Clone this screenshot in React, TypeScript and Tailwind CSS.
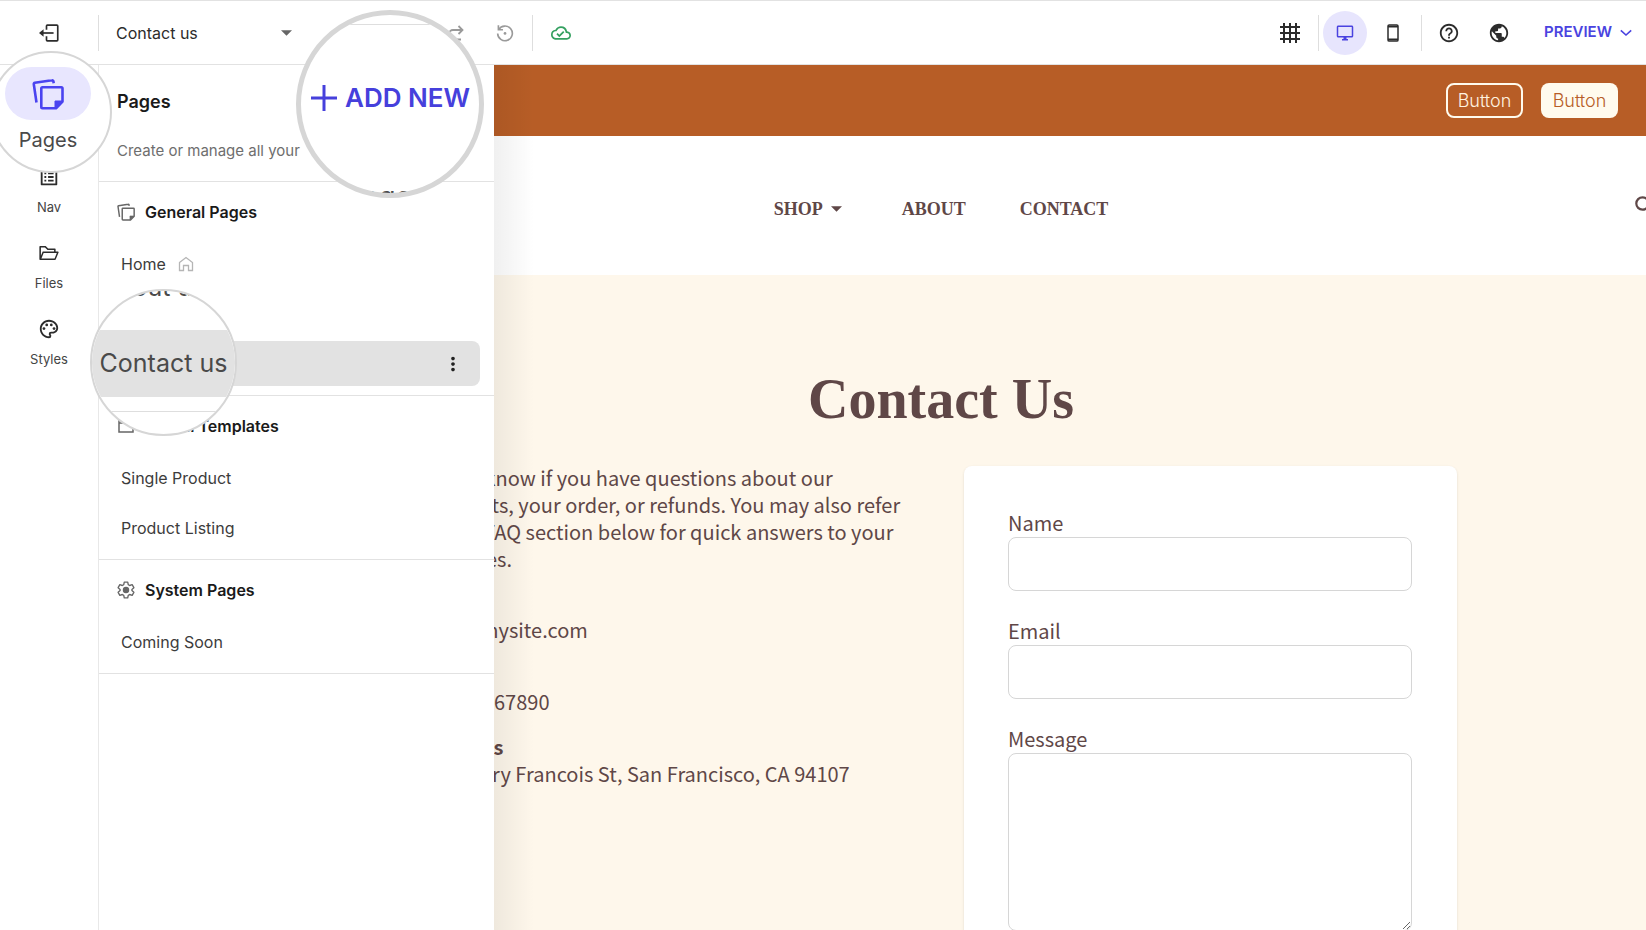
import React from "react";
import {
  MdGrid4X4,
  MdHelpOutline,
  MdPublic,
  MdListAlt,
  MdOutlinePalette,
  MdOutlineDesktopWindows,
  MdMoreVert,
  MdOutlineCloudDone,
} from "react-icons/md";
import { AiOutlineFolderOpen } from "react-icons/ai";

type IconProps = { className?: string };

function ExitIcon({ className }: IconProps) {
  return (
    <svg viewBox="0 0 24 24" className={className} fill="none" stroke="currentColor" strokeWidth="2" aria-hidden="true">
      <path d="M9 8V3.500a1 1 0 0 1 1-1h11.500a1 1 0 0 1 1 1v17a1 1 0 0 1-1 1H10a1 1 0 0 1-1-1V16" />
      <path d="M17.500 12H2" />
      <path d="M5.500 7.500 0 12l5.500 4.500z" fill="currentColor" stroke="none" />
    </svg>
  );
}

function PagesIcon({ className }: IconProps) {
  return (
    <svg viewBox="0 0 32 32" className={className} fill="none" stroke="currentColor" strokeWidth="2.600" strokeLinejoin="round" aria-hidden="true">
      <path d="M4.500 24.500 1.800 6.200a1.200 1.200 0 0 1 1-1.400L20 2.300a1.200 1.200 0 0 1 1.400 1l.3 2" />
      <path d="M10.500 9.200h18.800a1.200 1.200 0 0 1 1.200 1.200v13.100l-6.500 6.800H10.500a1.200 1.200 0 0 1-1.200-1.200V10.400a1.200 1.200 0 0 1 1.200-1.200z" />
      <path d="M23 30.300V23h7.500z" fill="currentColor" strokeWidth="1" />
    </svg>
  );
}

function HomeIcon({ className }: IconProps) {
  return (
    <svg viewBox="0 0 16 16" className={className} fill="none" stroke="currentColor" strokeWidth="1.300" aria-hidden="true">
      <path d="M1.500 6.500 8 1.500l6.500 5v8h-4V9.500h-5v5h-4z" />
    </svg>
  );
}

function GearIcon({ className }: IconProps) {
  return (
    <svg viewBox="0 0 24 24" className={className} fill="none" stroke="currentColor" strokeWidth="1.800" strokeLinejoin="round" aria-hidden="true">
      <path d="M9.700 1.500h4.600l.7 3.400 1.900 1.100 3.300-1.100 2.300 4-2.600 2.300v1.600l2.600 2.300-2.300 4-3.300-1.100-1.900 1.100-.7 3.400H9.700L9 19.100 7.100 18l-3.300 1.100-2.300-4 2.600-2.300v-1.600L1.500 8.900l2.300-4L7.100 6 9 4.900z" />
      <circle cx="12" cy="12" r="3.400" fill="currentColor" />
    </svg>
  );
}

function TemplateIcon({ className }: IconProps) {
  return (
    <svg viewBox="0 0 18 18" className={className} fill="none" stroke="currentColor" strokeWidth="1.500" aria-hidden="true">
      <path d="M2 1.500h13a1 1 0 0 1 1 1V15H2zM2 6h14" />
    </svg>
  );
}

function RedoIcon({ className }: IconProps) {
  return (
    <svg viewBox="0 0 24 24" className={className} fill="none" stroke="currentColor" strokeWidth="1.800" aria-hidden="true">
      <path d="M5 17V13a4 4 0 0 1 4-4h9M14.500 5l4 4-4 4M11 18.500h6" />
    </svg>
  );
}

function HistoryIcon({ className }: IconProps) {
  return (
    <svg viewBox="0 0 24 24" className={className} fill="none" stroke="currentColor" strokeWidth="1.800" aria-hidden="true">
      <path d="M5.200 8.200a8 8 0 1 1-1.200 4.300" />
      <path d="M4.800 3.500v5h5" />
      <circle cx="12" cy="12.500" r="1.500" fill="currentColor" stroke="none" />
    </svg>
  );
}

function PhoneIcon({ className }: IconProps) {
  return (
    <svg viewBox="0 0 20 20" className={className} fill="none" stroke="currentColor" aria-hidden="true">
      <rect x="5" y="1.900" width="10" height="16.200" rx="1.200" strokeWidth="1.500" />
      <path d="M5 3.600h10M5 16.400h10" strokeWidth="1.800" />
    </svg>
  );
}

function CaretIcon({ className }: IconProps) {
  return (
    <svg viewBox="0 0 12 6" className={className} fill="currentColor" aria-hidden="true">
      <path d="M0 0h12L6 6z" />
    </svg>
  );
}

function ChevronIcon({ className }: IconProps) {
  return (
    <svg viewBox="0 0 12 8" className={className} fill="none" stroke="currentColor" strokeWidth="1.600" aria-hidden="true">
      <path d="M.8 1.300 6 6l5.200-4.700" />
    </svg>
  );
}

function SearchIcon({ className }: IconProps) {
  return (
    <svg viewBox="0 0 20 20" className={className} fill="none" stroke="currentColor" strokeWidth="2.200" aria-hidden="true">
      <circle cx="7.500" cy="7.500" r="6.200" />
      <path d="m12 12 6.500 6.500" />
    </svg>
  );
}

function Divider() {
  return <span className="h-9 w-px shrink-0 bg-[#dedede]" />;
}

function TopBar() {
  return (
    <header className="flex h-[65px] shrink-0 items-center border-y border-[#e2e2e2] bg-white text-[#2c2c2c]">
      <div className="flex w-[98px] shrink-0 justify-center">
        <button aria-label="Exit editor">
          <ExitIcon className="size-5" />
        </button>
      </div>
      <Divider />
      <div className="relative ml-[17px] flex w-[178px] shrink-0 items-center">
        <select aria-label="Current page" className="w-full appearance-none bg-transparent text-base" defaultValue="Contact us">
          <option>Contact us</option>
          <option>Home</option>
          <option>About us</option>
        </select>
        <CaretIcon className="pointer-events-none absolute right-0.5 h-1.5 w-[11px] text-[#666]" />
      </div>
      <div className="ml-[100px] flex shrink-0 items-center gap-[26px] text-[#9a9a9a]">
        <button aria-label="Undo">
          <RedoIcon className="size-6 -scale-x-100" />
        </button>
        <button aria-label="Redo">
          <RedoIcon className="size-6" />
        </button>
        <button aria-label="History">
          <HistoryIcon className="size-[22px]" />
        </button>
      </div>
      <div className="ml-4 flex shrink-0 items-center gap-[18px]">
        <Divider />
        <MdOutlineCloudDone className="size-5 text-[#34a060]" />
      </div>

      <div className="ml-auto flex shrink-0 items-center pr-3.5">
        <button aria-label="Grid" className="mr-4">
          <MdGrid4X4 className="size-6" />
        </button>
        <Divider />
        <button aria-label="Desktop view" className="ml-1 flex size-11 items-center justify-center rounded-full bg-[#e7e5fd] text-[#4a43e0]">
          <MdOutlineDesktopWindows className="size-[18px]" />
        </button>
        <button aria-label="Phone view" className="mr-[18px] ml-4">
          <PhoneIcon className="size-5" />
        </button>
        <Divider />
        <button aria-label="Help" className="ml-4">
          <MdHelpOutline className="size-[22px]" />
        </button>
        <button aria-label="Language" className="ml-7">
          <MdPublic className="size-[22px]" />
        </button>
        <button className="ml-[34px] flex items-center gap-2 text-[15px] font-semibold text-[#4a43e0]">
          PREVIEW
          <ChevronIcon className="h-2 w-3" />
        </button>
      </div>
    </header>
  );
}

function RailItem({ label, children }: { label: string; children: React.ReactNode }) {
  return (
    <button className="flex flex-col items-center gap-2 text-[#2c2c2c]">
      <span className="flex size-6 items-center justify-center">{children}</span>
      <span className="text-[13px] leading-5 text-[#444]">{label}</span>
    </button>
  );
}

function Rail() {
  return (
    <nav aria-label="Editor" className="flex w-[98px] shrink-0 flex-col items-center gap-6 bg-white pt-[100px]">
      <RailItem label="Nav">
        <MdListAlt className="size-[22px]" />
      </RailItem>
      <RailItem label="Files">
        <AiOutlineFolderOpen className="size-[22px]" />
      </RailItem>
      <RailItem label="Styles">
        <MdOutlinePalette className="size-[22px]" />
      </RailItem>
    </nav>
  );
}

function Section({ icon, title, children }: { icon: React.ReactNode; title: string; children: React.ReactNode }) {
  return (
    <section className="border-b border-[#e2e2e2] pt-[18px] pr-3.5 pb-[9px] pl-3">
      <h3 className="flex h-6 items-center gap-2.5 pl-1.5 text-base font-semibold text-[#1a1a1a]">
        {icon}
        {title}
      </h3>
      <ul className="mt-[17px] flex flex-col gap-[5px]">{children}</ul>
    </section>
  );
}

type PageRowProps = { label: string; icon?: React.ReactNode; active?: boolean; magnified?: boolean };

/* A magnified row shows its name in the callout above it. */
function PageRow({ label, icon, active, magnified }: PageRowProps) {
  return (
    <li className={active ? "flex h-[45px] items-center rounded-lg bg-[#e2e2e2] px-2.5" : "flex h-[45px] items-center px-2.5"}>
      <a href="#page" aria-label={label} className="flex flex-1 items-center gap-3 text-base text-[#3c3c3c]">
        {!magnified && label}
        {icon}
      </a>
      {active && (
        <button aria-label="Page options" className="mr-1.5 text-[#222]">
          <MdMoreVert className="size-[22px]" />
        </button>
      )}
    </li>
  );
}

function PagesPanel() {
  return (
    <aside className="absolute inset-y-0 left-0 z-10 w-[396px] border-l border-[#e8e8e8] bg-white">
      <div className="absolute inset-y-0 left-full w-10 bg-linear-to-r from-black/6 to-transparent" />
      <div className="border-b border-[#e2e2e2] px-[18px] pt-[23px] pb-[18px]">
        <h2 className="text-lg leading-7 font-semibold text-[#1a1a1a]">Pages</h2>
        <p className="mt-[23px] text-[15px] leading-6 text-[#6e6e6e]">Create or manage all your</p>
      </div>
      <Section title="General Pages" icon={<PagesIcon className="size-[18px] text-[#666]" />}>
        <PageRow label="Home" icon={<HomeIcon className="size-4 text-[#b5b5b5]" />} />
        <PageRow label="About us" magnified />
        <PageRow label="Contact us" active magnified />
      </Section>
      <Section title="Global Templates" icon={<TemplateIcon className="size-[18px] text-[#666]" />}>
        <PageRow label="Single Product" />
        <PageRow label="Product Listing" />
      </Section>
      <Section title="System Pages" icon={<GearIcon className="size-[18px] text-[#666]" />}>
        <PageRow label="Coming Soon" />
      </Section>
    </aside>
  );
}

function Site() {
  return (
    <div className="w-[calc(100%+138px)] text-[#5f4747]">
      <div className="flex h-[71px] items-center justify-end gap-[18px] bg-[#b75d26] pr-[166px]">
        <button className="h-[35px] w-[77px] rounded-lg border-2 border-[#fffbee] text-lg leading-none font-light text-[#fff3e0]">Button</button>
        <button className="h-[35px] w-[77px] rounded-lg bg-[#fffbee] text-lg leading-none font-light text-[#b75d26]">Button</button>
      </div>

      <header className="grid h-[139px] grid-cols-[1fr_auto_1fr] items-center bg-white px-[129px]">
        <span />
        <nav aria-label="Site" className="flex gap-[54px] pt-1.5 font-['Liberation_Serif',serif] text-lg font-bold">
          <a href="#shop" className="flex items-center gap-2 pr-1.5">
            SHOP
            <CaretIcon className="h-1.5 w-[11px]" />
          </a>
          <a href="#about">ABOUT</a>
          <a href="#contact">CONTACT</a>
        </nav>
        <button aria-label="Search" className="justify-self-end">
          <SearchIcon className="size-5" />
        </button>
      </header>

      <div className="bg-[#fef7eb] px-[327px] pt-[88px] pb-24">
        <h1 className="text-center font-['Liberation_Serif',serif] text-[56px] leading-[72px] font-bold">Contact Us</h1>
        <div className="mt-[29px] grid grid-cols-[minmax(0,1fr)_493px] gap-[46px] font-['Noto_Sans_CJK_SC',sans-serif] text-xl">
          <div className="leading-[27px]">
            <p>Let us know if you have questions about our products, your order, or refunds. You may also refer to the FAQ section below for quick answers to your inquiries.</p>
            <p className="mt-11">info@mysite.com</p>
            <p className="mt-[45px]">(123)4567890</p>
            <p className="mt-[18px] font-bold">Address</p>
            <p>500 Terry Francois St, San Francisco, CA 94107</p>
          </div>
          <form className="mt-0.5 flex flex-col gap-[27px] rounded-lg bg-white pt-11 pr-[45px] pb-11 pl-11 leading-[26px] shadow-sm">
            <label className="flex flex-col gap-px">
              Name
              <input type="text" className="h-[54px] rounded-lg border border-[#d6d6d6] bg-white px-3" />
            </label>
            <label className="flex flex-col gap-px">
              Email
              <input type="email" className="h-[54px] rounded-lg border border-[#d6d6d6] bg-white px-3" />
            </label>
            <label className="flex flex-col gap-px">
              Message
              <textarea className="h-[178px] resize rounded-lg border border-[#d6d6d6] bg-white px-3 py-2" />
            </label>
          </form>
        </div>
      </div>
    </div>
  );
}

function Callouts() {
  return (
    <>
      <div className="absolute top-[51px] -left-2.5 z-20 flex size-[122px] flex-col items-center overflow-hidden rounded-full border-2 border-[#d6d6d6] bg-white pt-3.5 pr-1.5">
        <button className="flex flex-col items-center gap-1.5 text-xl leading-7 text-[#4a4a4a]">
          <span className="flex h-[53px] w-[86px] items-center justify-center rounded-full bg-[#e8e6fe] text-[#4a43f0]">
            <PagesIcon className="size-8" />
          </span>
          Pages
        </button>
      </div>

      <div className="absolute top-[10px] left-[296px] z-20 size-[188px] overflow-hidden rounded-full border-[5px] border-[#d6d6d6] bg-white">
        <div className="mt-[9px] h-px bg-[#dedede]" />
        <button className="mt-[53px] flex w-full items-center gap-2 pl-2.5 text-[26px] leading-10 font-semibold whitespace-nowrap text-[#4640dc]">
          <svg viewBox="0 0 26 26" className="size-[26px] shrink-0" fill="none" stroke="currentColor" strokeWidth="3" aria-hidden="true">
            <path d="M13 0v26M0 13h26" />
          </svg>
          ADD NEW
        </button>
        <p className="mt-[61px] text-center text-[28px] leading-9 text-[#4a4a4a]">pages.</p>
      </div>

      <div className="absolute top-[289px] left-[90px] z-20 size-[147px] overflow-hidden rounded-full border-2 border-[#d6d6d6] bg-white text-[25px] text-[#4a4a4a]">
        <p className="-mt-4 h-[55px] pl-2 leading-6">About us</p>
        <p className="flex h-[67px] items-center justify-center bg-[#e2e2e2] whitespace-nowrap">Contact us</p>
        <div className="mt-[14px] h-px bg-[#dedede]" />
      </div>
    </>
  );
}

export default function App() {
  return (
    <div className="relative flex h-screen flex-col overflow-hidden bg-white font-['Inter',sans-serif]">
      <TopBar />
      <div className="flex min-h-0 flex-1">
        <Rail />
        <main className="relative min-w-0 flex-1 overflow-hidden bg-[#fef7eb]">
          <PagesPanel />
          <Site />
        </main>
      </div>
      <Callouts />
    </div>
  );
}
